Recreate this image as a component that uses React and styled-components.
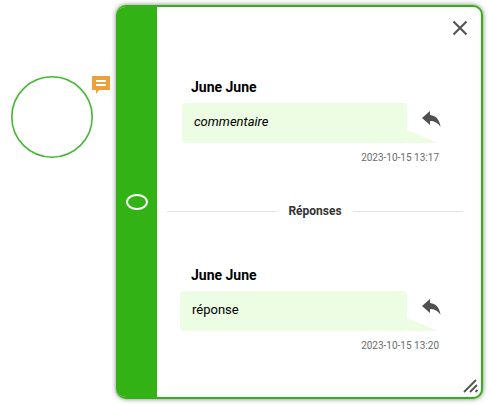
import styled, { createGlobalStyle } from "styled-components";

const GlobalStyle = createGlobalStyle`
  html, body {
    margin: 0;
    padding: 0;
    background: #fff;
  }
  body {
    font-family: Roboto, "Open Sans", sans-serif;
    color: #000;
  }
`;

function App() {
  return (
    <>
      <GlobalStyle />
      <Page>
        <NodeArea>
          <Node>
            <svg width="82" height="82" viewBox="0 0 82 82">
              <circle cx="41" cy="41" r="40.2" fill="none" stroke="#45b733" strokeWidth="1.6" />
            </svg>
            <Badge>
              <svg width="18" height="18" viewBox="0 0 18 18">
                <path d="M0 0H18V14H7L4 18V14H0Z" fill="#eca13a" />
                <rect x="4" y="4" width="10" height="2" fill="#fff" />
                <rect x="4" y="8" width="10" height="2" fill="#fff" />
              </svg>
            </Badge>
          </Node>
        </NodeArea>
        <Panel>
          <Sidebar>
            <SideOval />
          </Sidebar>
          <Content>
            <CloseButton aria-label="Fermer">
              <svg width="16" height="16" viewBox="0 0 16 16">
                <path d="M1.5 1.5L14.5 14.5M14.5 1.5L1.5 14.5" stroke="#555" strokeWidth="2.2" fill="none" />
              </svg>
            </CloseButton>
            <Comment
              author="June June"
              text="commentaire"
              date="2023-10-15 13:17"
              italic
              inset={25}
            />
            <Divider>
              <DividerLabel>Réponses</DividerLabel>
            </Divider>
            <Comment author="June June" text="réponse" date="2023-10-15 13:20" inset={23} />
            <ResizeHandle>
              <svg width="15" height="15" viewBox="0 0 15 15">
                <path d="M1 14L13 2M7 14L14 7M12.5 14L14.5 12" stroke="#555" strokeWidth="1.9" fill="none" />
              </svg>
            </ResizeHandle>
          </Content>
        </Panel>
      </Page>
    </>
  );
}

function Comment({ author, text, date, italic, inset }) {
  return (
    <CommentBlock>
      <Author>{author}</Author>
      <BubbleRow $inset={inset}>
        <Bubble $italic={italic}>
          {text}
          <BubbleTail />
        </Bubble>
        <ReplyButton aria-label="Répondre">
          <svg width="19" height="18" viewBox="0 0 19 18">
            <path
              d="M8 1L0 8L8 15V11C12.5 11 16 13 18.5 16.8C17.8 10.5 14.5 5.6 8 5Z"
              fill="#505050"
            />
          </svg>
        </ReplyButton>
      </BubbleRow>
      <DateLine>{date}</DateLine>
    </CommentBlock>
  );
}

export default App;

const Page = styled.div`
  display: flex;
  width: 490px;
  height: 405px;
  overflow: hidden;
  padding: 5px 0 6px;
  box-sizing: border-box;
`;

const NodeArea = styled.div`
  width: 116px;
  flex: none;
  padding: 71px 0 0 11px;
  box-sizing: border-box;
`;

const Node = styled.div`
  position: relative;
  width: 82px;
  height: 82px;
  line-height: 0;
`;

const Badge = styled.div`
  position: absolute;
  top: 0;
  left: 81px;
  width: 18px;
  height: 18px;
`;

const Panel = styled.div`
  display: flex;
  width: 367px;
  height: 394px;
  flex: none;
  box-sizing: border-box;
  border: 2px solid #33b215;
  border-left: none;
  border-radius: 10px;
  background: #fff;
  box-shadow: 0 0 5px rgba(0, 0, 0, 0.5);
  overflow: hidden;
`;

const Sidebar = styled.div`
  display: flex;
  align-items: center;
  justify-content: center;
  width: 41px;
  flex: none;
  background: #33b215;
`;

const SideOval = styled.div`
  width: 22px;
  height: 16px;
  border: 2px solid #fff;
  border-radius: 50%;
  box-sizing: border-box;
`;

const Content = styled.div`
  position: relative;
  flex: 1;
  padding-top: 70px;
  min-width: 0;
`;

const CloseButton = styled.div`
  position: absolute;
  top: 13px;
  right: 13px;
  line-height: 0;
`;

const CommentBlock = styled.div`
  display: flex;
  flex-direction: column;
`;

const Author = styled.div`
  padding-left: 34px;
  font-size: 14px;
  font-weight: 700;
  line-height: 20px;
`;

const BubbleRow = styled.div`
  display: flex;
  align-items: flex-start;
  margin-top: 6px;
  padding-left: ${(p) => p.$inset}px;
`;

const Bubble = styled.div`
  position: relative;
  width: ${(p) => (p.$italic ? "225px" : "227px")};
  height: 40px;
  padding-left: 12px;
  box-sizing: border-box;
  flex: none;
  background: #ecfde4;
  border-radius: 4px;
  font-size: 13px;
  font-style: ${(p) => (p.$italic ? "italic" : "normal")};
  line-height: 38px;
`;

const BubbleTail = styled.div`
  position: absolute;
  left: 100%;
  bottom: 0;
  width: 31px;
  height: 13px;
  background: #ecfde4;
  clip-path: polygon(0 0, 100% 100%, 0 100%);
`;

const ReplyButton = styled.div`
  margin: 7px 0 0 15px;
  line-height: 0;
`;

const DateLine = styled.div`
  margin-top: 8px;
  width: 282px;
  text-align: right;
  font-size: 10px;
  line-height: 14px;
  color: #6b6b6b;
`;

const Divider = styled.div`
  display: flex;
  align-items: center;
  gap: 11px;
  margin: 37px 18px 45px 10px;
  height: 18px;
  &::before,
  &::after {
    content: "";
    flex: 1;
    height: 1px;
    background: #e2e2e2;
  }
`;

const DividerLabel = styled.div`
  font-size: 12px;
  font-weight: 700;
  color: #333;
`;

const ResizeHandle = styled.div`
  position: absolute;
  right: 3px;
  bottom: 4px;
  line-height: 0;
`;
